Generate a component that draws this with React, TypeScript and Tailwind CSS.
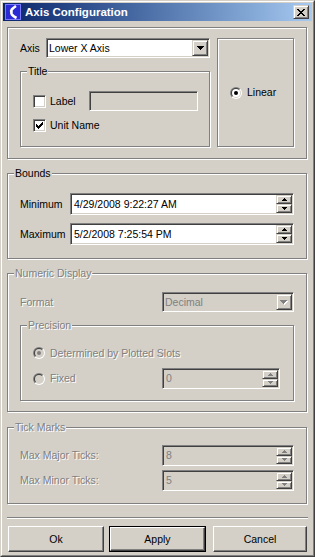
import React from "react";

const sunken =
  "border border-t-[#808080] border-l-[#808080] border-r-white border-b-white shadow-[inset_1px_1px_0_#404040,inset_-1px_-1px_0_#d4d0c8]";
const raisedSmall =
  "border border-t-[#d4d0c8] border-l-[#d4d0c8] border-r-[#404040] border-b-[#404040] shadow-[inset_1px_1px_0_#fff,inset_-1px_-1px_0_#808080]";
const raisedBtn =
  "border border-t-white border-l-white border-r-[#404040] border-b-[#404040] shadow-[inset_-1px_-1px_0_#808080]";
const etched = "border border-[#808080] shadow-[inset_1px_1px_0_#fff,1px_1px_0_#fff]";
const dis = "text-[#808080] [text-shadow:1px_1px_0_#fff]";

function Pixels({ rows, color, w, h, shadow }: { rows: number[][]; color: string; w: number; h: number; shadow?: boolean }) {
  return (
    <svg width={w + (shadow ? 1 : 0)} height={h + (shadow ? 1 : 0)} shapeRendering="crispEdges">
      {shadow &&
        rows.map(([x, y, ww, hh], i) => <rect key={"s" + i} x={x + 1} y={y + 1} width={ww} height={hh} fill="#fff" />)}
      {rows.map(([x, y, ww, hh], i) => (
        <rect key={i} x={x} y={y} width={ww} height={hh} fill={color} />
      ))}
    </svg>
  );
}

const downArrow = [
  [0, 0, 7, 1],
  [1, 1, 5, 1],
  [2, 2, 3, 1],
  [3, 3, 1, 1],
];
const spinUp = [
  [2, 0, 1, 1],
  [1, 1, 3, 1],
  [0, 2, 5, 1],
];
const spinDown = [
  [0, 0, 5, 1],
  [1, 1, 3, 1],
  [2, 2, 1, 1],
];

function Combo({ value, w, disabled }: { value: string; w: string; disabled?: boolean }) {
  return (
    <div className={`${sunken} ${w} h-[20px] p-[1px] flex ${disabled ? "bg-[#d4d0c8]" : "bg-white"}`}>
      <span className={`flex-1 flex items-center pl-[1px] ${disabled ? "text-[#808080]" : ""}`}>{value}</span>
      <div className={`${raisedSmall} w-[16px] h-[16px] flex items-center justify-center bg-[#d4d0c8]`}>
        <Pixels rows={downArrow} w={7} h={4} color={disabled ? "#808080" : "#000"} shadow={disabled} />
      </div>
    </div>
  );
}

function Spinner({ value, w, h, disabled }: { value: string; w: string; h: string; disabled?: boolean }) {
  const c = disabled ? "#808080" : "#000";
  return (
    <div className={`${sunken} ${w} ${h} p-[1px] flex ${disabled ? "bg-[#d4d0c8]" : "bg-white"}`}>
      <span className={`flex-1 flex items-center pl-[2px] ${disabled ? "text-[#808080]" : ""}`}>{value}</span>
      <div className="w-[16px] flex flex-col">
        <div className={`${raisedSmall} flex-1 flex items-center justify-center bg-[#d4d0c8]`}>
          <Pixels rows={spinUp} w={5} h={3} color={c} />
        </div>
        <div className={`${raisedSmall} flex-1 flex items-center justify-center bg-[#d4d0c8]`}>
          <Pixels rows={spinDown} w={5} h={3} color={c} />
        </div>
      </div>
    </div>
  );
}

function Checkbox({ checked }: { checked?: boolean }) {
  const rows = [
    [1, 3, 1, 3],
    [2, 4, 1, 3],
    [3, 5, 1, 3],
    [4, 4, 1, 3],
    [5, 3, 1, 3],
    [6, 2, 1, 3],
    [7, 1, 1, 3],
  ];
  return (
    <div className={`${sunken} w-[13px] h-[13px] bg-white p-[1px] shrink-0`}>
      {checked && <Pixels rows={rows} w={9} h={9} color="#000" />}
    </div>
  );
}

function Radio({ id, checked, disabled }: { id: string; checked?: boolean; disabled?: boolean }) {
  return (
    <svg width="12" height="12" viewBox="0 0 12 12" className="shrink-0">
      <defs>
        <clipPath id={id + "tl"}>
          <polygon points="0,0 12,0 0,12" />
        </clipPath>
        <clipPath id={id + "br"}>
          <polygon points="12,0 12,12 0,12" />
        </clipPath>
      </defs>
      <circle cx="6" cy="6" r="6" fill="#808080" clipPath={`url(#${id}tl)`} />
      <circle cx="6" cy="6" r="6" fill="#fff" clipPath={`url(#${id}br)`} />
      <circle cx="6" cy="6" r="5" fill="#404040" clipPath={`url(#${id}tl)`} />
      <circle cx="6" cy="6" r="5" fill="#d4d0c8" clipPath={`url(#${id}br)`} />
      <circle cx="6" cy="6" r="4" fill={disabled ? "#d4d0c8" : "#fff"} />
      {checked && <circle cx="6" cy="6" r="2" fill={disabled ? "#808080" : "#000"} />}
    </svg>
  );
}

function Group({
  label,
  className,
  children,
  disabled,
}: {
  label?: string;
  className?: string;
  children?: React.ReactNode;
  disabled?: boolean;
}) {
  return (
    <div className={`${etched} flex flex-col ${className ?? ""}`}>
      {label && (
        <span className={`-mt-[7px] ml-[6px] px-[1px] self-start bg-[#d4d0c8] leading-[13px] ${disabled ? dis : ""}`}>
          {label}
        </span>
      )}
      {children}
    </div>
  );
}

const xGlyph = [
  "XX....XX",
  ".XX..XX.",
  "..XXXX..",
  "...XX...",
  "..XXXX..",
  ".XX..XX.",
  "XX....XX",
]
  .flatMap((r, y) => r.split("").map((ch, x) => (ch === "X" ? [x, y, 1, 1] : null)))
  .filter((v): v is number[] => v !== null);

function TitleBar() {
  return (
    <div className="h-[18px] flex items-center bg-linear-to-r from-[#0a246a] to-[#a6caf0] pl-[2px] pr-[3px]">
      <svg width="16" height="16" viewBox="0 0 16 16" className="shrink-0">
        <rect x="0" y="0" width="16" height="16" fill="#2b2bd6" />
        <rect x="0.5" y="0.5" width="15" height="15" fill="none" stroke="#7a7aff" />
        <path d="M11 2 C7 4.5 5.5 6.5 6.5 8 C5.5 9.5 7 11.5 11.5 14" stroke="#fff" strokeWidth="2.6" fill="none" />
      </svg>
      <span className="ml-[4px] text-white font-bold text-[11.5px] leading-[18px]">Axis Configuration</span>
      <div className={`${raisedSmall} ml-auto w-[16px] h-[14px] bg-[#d4d0c8] flex items-center justify-center`}>
        <Pixels rows={xGlyph} w={8} h={7} color="#000" />
      </div>
    </div>
  );
}

export default function App() {
  return (
    <div className="w-[315px] h-[557px] bg-[#d4d0c8] border border-t-[#d4d0c8] border-l-[#d4d0c8] border-r-[#404040] border-b-[#404040] font-['Liberation_Sans',Arial,sans-serif] text-[10.5px] leading-[13px] text-black">
      <div className="h-full border border-t-white border-l-white border-r-[#808080] border-b-[#808080] p-[1px] flex flex-col">
        <TitleBar />
        <div className="flex flex-col px-[4px]">
          {/* Top box */}
          <div className={`${etched} mt-[6px] w-[300px] h-[132px] flex pl-[12px] pt-[10px]`}>
            <div className="w-[190px] flex flex-col">
              <div className="h-[20px] flex items-center">
                <span className="w-[26px]">Axis</span>
                <Combo value="Lower X Axis" w="w-[164px]" />
              </div>
              <Group label="Title" className="mt-[13px] h-[76px] w-[190px]">
                <div className="mt-[13px] h-[20px] flex items-center pl-[12px] pr-[11px]">
                  <Checkbox />
                  <span className="ml-[4px]">Label</span>
                  <div className={`${sunken} ml-auto w-[109px] h-[20px] bg-[#d4d0c8]`} />
                </div>
                <div className="mt-[8px] h-[13px] flex items-center pl-[12px]">
                  <Checkbox checked />
                  <span className="ml-[4px]">Unit Name</span>
                </div>
              </Group>
            </div>
            <div className={`${etched} ml-[7px] w-[77px] h-[109px] flex items-center pl-[12px]`}>
              <Radio id="lin" checked />
              <span className="ml-[5px]">Linear</span>
            </div>
          </div>

          {/* Bounds */}
          <Group label="Bounds" className="mt-[14px] w-[300px] h-[86px]">
            <div className="mt-[13px] h-[22px] flex items-center pl-[12px] pr-[12px]">
              <span>Minimum</span>
              <Spinner value="4/29/2008 9:22:27 AM" w="w-[224px] ml-auto" h="h-[22px]" />
            </div>
            <div className="mt-[8px] h-[22px] flex items-center pl-[12px] pr-[12px]">
              <span>Maximum</span>
              <Spinner value="5/2/2008 7:25:54 PM" w="w-[224px] ml-auto" h="h-[22px]" />
            </div>
          </Group>

          {/* Numeric Display */}
          <Group label="Numeric Display" disabled className="mt-[14px] w-[300px] h-[139px]">
            <div className="mt-[12px] h-[20px] flex items-center pl-[12px] pr-[12px]">
              <span className={dis}>Format</span>
              <div className="ml-auto">
                <Combo value="Decimal" w="w-[132px]" disabled />
              </div>
            </div>
            <Group label="Precision" disabled className="mt-[13px] ml-[12px] w-[274px] h-[76px]">
              <div className="mt-[15px] h-[12px] flex items-center pl-[12px]">
                <Radio id="det" checked disabled />
                <span className={`ml-[5px] ${dis}`}>Determined by Plotted Slots</span>
              </div>
              <div className="mt-[9px] h-[21px] flex items-center pl-[12px] pr-[13px]">
                <Radio id="fix" disabled />
                <span className={`ml-[5px] ${dis}`}>Fixed</span>
                <Spinner value="0" w="w-[118px] ml-auto" h="h-[21px]" disabled />
              </div>
            </Group>
          </Group>

          {/* Tick Marks */}
          <Group label="Tick Marks" disabled className="mt-[15px] w-[300px] h-[77px]">
            <div className="mt-[11px] h-[21px] flex items-center pl-[12px] pr-[12px]">
              <span className={dis}>Max Major Ticks:</span>
              <Spinner value="8" w="w-[132px] ml-auto" h="h-[21px]" disabled />
            </div>
            <div className="mt-[4px] h-[21px] flex items-center pl-[12px] pr-[12px]">
              <span className={dis}>Max Minor Ticks:</span>
              <Spinner value="5" w="w-[132px] ml-auto" h="h-[21px]" disabled />
            </div>
          </Group>

          {/* Separator */}
          <div className="mt-[13px] w-[301px] h-[2px] border-t border-t-[#808080] border-b border-b-white" />

          {/* Buttons */}
          <div className="mt-[7px] h-[26px] flex pl-[1px]">
            <button className={`${raisedBtn} w-[96px] h-[26px] bg-[#d4d0c8] flex items-center justify-center`}>Ok</button>
            <div className="ml-[5px] w-[97px] h-[26px] border border-black">
              <button className={`${raisedBtn} w-full h-full bg-[#d4d0c8] flex items-center justify-center`}>
                Apply
              </button>
            </div>
            <button className={`${raisedBtn} ml-[7px] w-[94px] h-[26px] bg-[#d4d0c8] flex items-center justify-center`}>
              Cancel
            </button>
          </div>
        </div>
      </div>
    </div>
  );
}
